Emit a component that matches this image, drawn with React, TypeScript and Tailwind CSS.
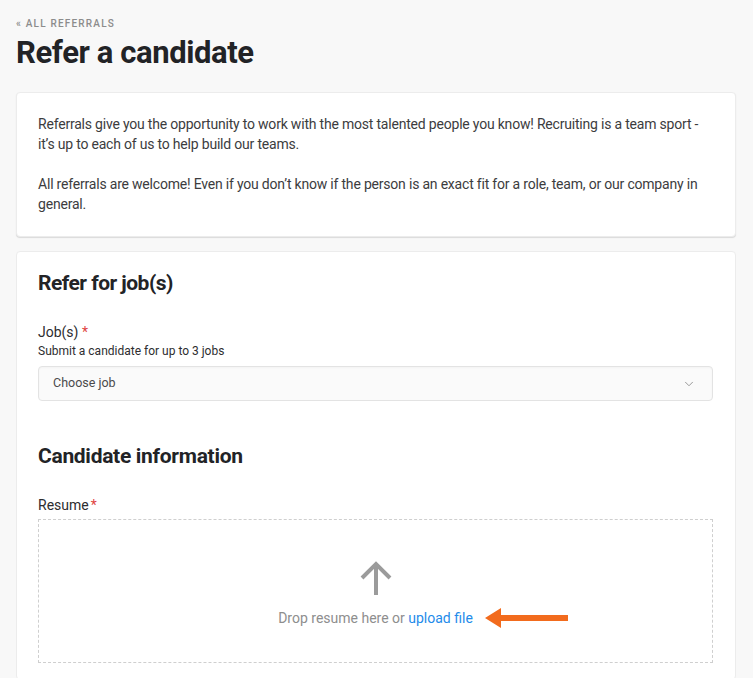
import React from 'react';
import { ChevronDown } from 'lucide-react';

const font = { fontFamily: 'Roboto, "Noto Sans", sans-serif' };

const App: React.FC = () => {
  return (
    <div className="min-h-[678px] bg-[#f8f8f8] px-4 pt-[18px] text-[#2d2d2f]" style={font}>
      <a href="#" className="block text-[10px] font-medium uppercase tracking-[0.12em] text-[#8c8c8c] leading-3">
        « All referrals
      </a>
      <h1 className="mt-[5px] text-[31px] font-bold leading-9 tracking-[-0.4px] text-[#222326]">Refer a candidate</h1>

      {/* Intro card */}
      <div className="mt-[21px] mr-px rounded-sm border border-[#ececec] bg-white pl-[21px] pr-[22px] pt-[21px] pb-[22px] shadow-[0_1px_1px_rgba(0,0,0,0.12)]">
        <p className="text-[14px] leading-5 tracking-[-0.2px] text-[#3c3c3e]">
          Referrals give you the opportunity to work with the most talented people you know! Recruiting is a team sport - it’s up to each of us to help build our teams.
        </p>
        <p className="mt-5 text-[14px] leading-5 tracking-[-0.2px] text-[#3c3c3e]">
          All referrals are welcome! Even if you don’t know if the person is an exact fit for a role, team, or our company in general.
        </p>
      </div>

      {/* Form card */}
      <div className="mt-[14px] mr-px rounded-sm border border-[#ececec] bg-white pl-[21px] pr-[22px] pt-[17px] pb-4">
        <h2 className="text-[21px] font-bold leading-7 tracking-tight text-[#222326]">Refer for job(s)</h2>

        <div className="mt-[25px]">
          <label className="block text-[14px] leading-5 text-[#2d2d2f]">
            Job(s) <span className="text-[#e0433f]">*</span>
          </label>
          <p className="mt-px text-[12px] leading-4 text-[#2d2d2f]">Submit a candidate for up to 3 jobs</p>
          <button className="mt-[7px] flex h-[35px] w-full items-center justify-between rounded-sm border border-[#e3e3e3] bg-[#fafafa] pl-[14px] pr-[16px] text-left text-[12.5px] text-[#4a4a4c] shadow-[inset_0_1px_2px_rgba(0,0,0,0.03)]">
            <span>Choose job</span>
            <ChevronDown className="h-3.5 w-3.5 text-[#8a8a8a]" strokeWidth={1.5} />
          </button>
        </div>

        <h2 className="mt-[41px] text-[21px] font-bold leading-7 tracking-[-0.3px] text-[#222326]">Candidate information</h2>

        <div className="mt-[25px]">
          <label className="block text-[14px] leading-5 text-[#2d2d2f]">
            Resume<span className="ml-0.5 text-[#e0433f]">*</span>
          </label>
          <div className="mt-[4px] flex h-[144px] flex-col items-center justify-center border border-dashed border-[#cfcfcf] pt-[6px]">
            <svg width="34" height="36" viewBox="0 0 34 36" fill="none" stroke="#9b9b9b" strokeWidth="4">
              <path d="M17 35V4" />
              <path d="M3 18L17 4L31 18" />
            </svg>
            <div className="relative mt-[12px] text-[14px] leading-5 text-[#8e8e8e]">
              Drop resume here or <a href="#" className="text-[#1e8bea]">upload file</a>
              <svg className="absolute left-[calc(100%+12px)] top-1/2 -translate-y-1/2" width="84" height="22" viewBox="0 0 84 22">
                <path d="M0 11L16 1V8H83V14H16V21Z" fill="#f26b1d" />
              </svg>
            </div>
          </div>
        </div>
      </div>
    </div>
  );
};

export default App;
